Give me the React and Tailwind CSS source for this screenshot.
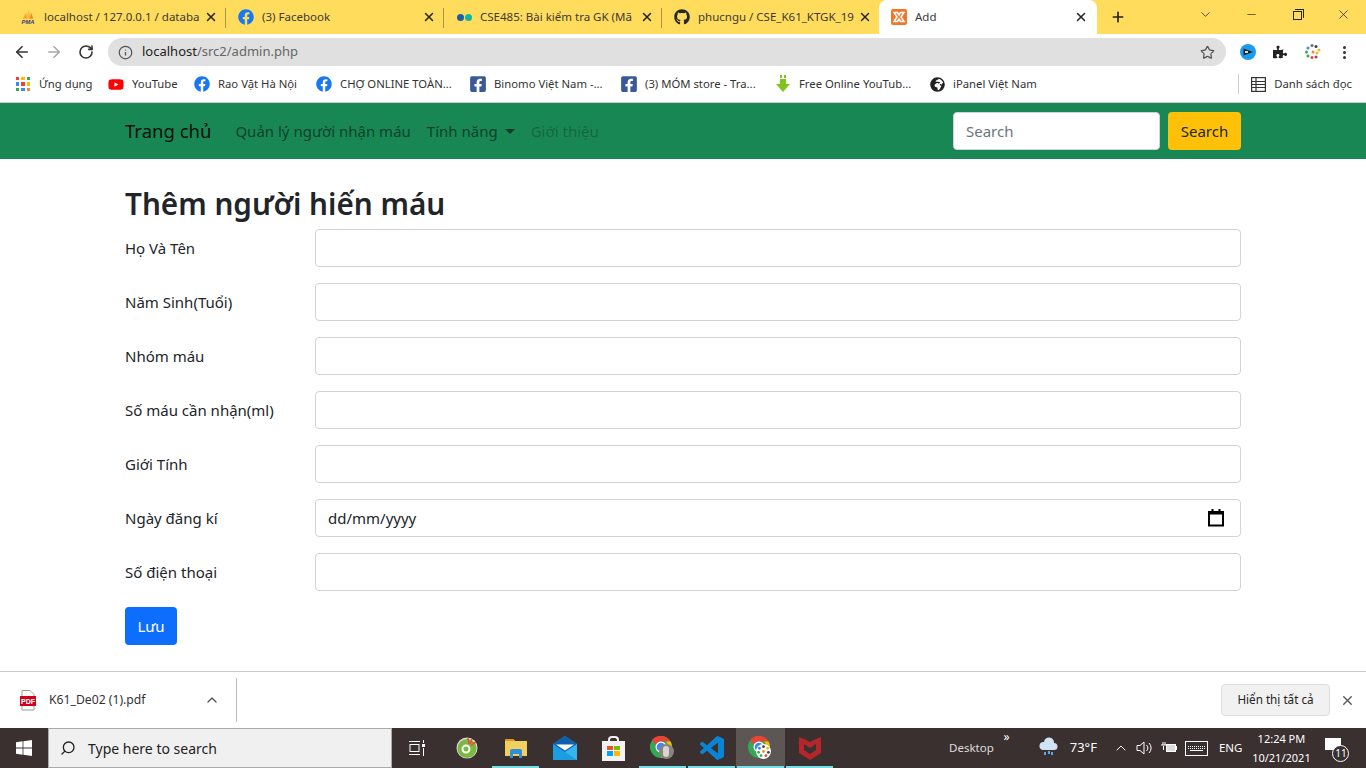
import { FaFacebook, FaGithub, FaYoutube, FaFacebookSquare, FaGlobeAfrica, FaPuzzlePiece } from 'react-icons/fa'
import { ArrowLeft, ArrowRight, RotateCw, Star, Info, X, Plus, ChevronDown, ChevronUp, Minus, Search } from 'lucide-react'

const tabs = [
  { title: 'localhost / 127.0.0.1 / databa', icon: <PmaIcon /> },
  { title: '(3) Facebook', icon: <FaFacebook className="text-[16px] text-[#1877f2]" /> },
  { title: 'CSE485: Bài kiểm tra GK (Mã', icon: <Dots /> },
  { title: 'phucngu / CSE_K61_KTGK_19', icon: <FaGithub className="text-[16px] text-[#24292e]" /> },
]

const bookmarks = [
  { title: 'Ứng dụng', icon: <AppsIcon />, w: 'w-[93px]' },
  { title: 'YouTube', icon: <FaYoutube className="text-[17px] text-[#f00]" />, w: 'w-[86px]' },
  { title: 'Rao Vặt Hà Nội', icon: <FaFacebook className="text-[16px] text-[#1877f2]" />, w: 'w-[122px]' },
  { title: 'CHỢ ONLINE TOÀN...', icon: <FaFacebook className="text-[16px] text-[#1877f2]" />, w: 'w-[154px]' },
  { title: 'Binomo Việt Nam -...', icon: <FaFacebookSquare className="text-[18px] text-[#3b5998]" />, w: 'w-[151px]' },
  { title: '(3) MÓM store - Tra...', icon: <FaFacebookSquare className="text-[18px] text-[#3b5998]" />, w: 'w-[154px]' },
  { title: 'Free Online YouTub...', icon: <DownIcon />, w: 'w-[154px]' },
  { title: 'iPanel Việt Nam', icon: <FaGlobeAfrica className="text-[15px] text-[#222]" />, w: 'w-[120px]' },
]

const fields = ['Họ Và Tên', 'Năm Sinh(Tuổi)', 'Nhóm máu', 'Số máu cần nhận(ml)', 'Giới Tính', 'Ngày đăng kí', 'Số điện thoại']

function PmaIcon() {
  return (
    <svg width="18" height="18" viewBox="0 0 18 18">
      <path d="M3 11 L7 4 L8 11 Z" fill="#f6a623" />
      <path d="M7 11 L10 1 L12 11 Z" fill="#f9b54c" />
      <path d="M11 11 L12.500 4 L15 11 Z" fill="#f08a1d" />
      <text x="9" y="17" fontSize="6.500" fontWeight="700" fontStyle="italic" fill="#2f3f7f" textAnchor="middle" fontFamily="Liberation Sans">PMA</text>
    </svg>
  )
}

function Dots() {
  return (
    <span className="flex gap-[1px]">
      <span className="w-[7px] h-[7px] rounded-full bg-[#1a5fa8]" />
      <span className="w-[7px] h-[7px] rounded-full bg-[#12b6a0]" />
    </span>
  )
}

function XamppIcon() {
  return (
    <svg width="16" height="16" viewBox="0 0 16 16" className="shrink-0">
      <rect width="16" height="16" rx="2" fill="#f0762b" />
      <path d="M3 3.500h3.500L8 6l1.500-2.500H13L10 8l3 4.500H9.500L8 10l-1.500 2.500H3L6 8z" fill="none" stroke="#fff" strokeWidth="1.500" />
    </svg>
  )
}

function AppsIcon() {
  const colors = ['#ea4335', '#fbbc04', '#34a853', '#4285f4', '#ea4335', '#fbbc04', '#34a853', '#4285f4', '#f28b1d']
  return (
    <span className="grid grid-cols-3 gap-[2px] w-[14px]">
      {colors.map((c, i) => <span key={i} className="w-[3.3px] h-[3.3px]" style={{ background: c }} />)}
    </span>
  )
}

function DownIcon() {
  return (
    <svg width="16" height="18" viewBox="0 0 16 18">
      <path d="M5 0h2v3H5zM9 0h2v3H9zM5 4h6v5h4l-7 8-7-8h4z" fill="#7fc31c" />
    </svg>
  )
}

function ReadingListIcon() {
  return (
    <svg width="15" height="15" viewBox="0 0 15 15" fill="none" stroke="#333" strokeWidth="1.200">
      <rect x=".6" y=".6" width="13.800" height="13.800" />
      <path d="M.6 4.500h13.800M.6 7.500h13.800M.6 10.500h13.800M5 .6v13.800" />
    </svg>
  )
}

function ExtensionCircle() {
  return (
    <svg width="16" height="16" viewBox="0 0 16 16">
      <circle cx="8" cy="8" r="8" fill="#1a9cf0" />
      <path d="M3.500 4.500 13 8l-9.500 3.500z" fill="#222" />
      <path d="M5 7h3v2H5z" fill="#ddd" />
    </svg>
  )
}

function ColorDots() {
  const dots = [
    [7, 1.500, '#5f6f8a'], [11, 2.500, '#444'], [3, 4, '#4285f4'], [14, 6, '#f9b233'], [1.500, 8, '#34a853'],
    [8, 8, '#f28b1d'], [12, 9, '#f9b233'], [3, 12, '#34a853'], [7, 13.500, '#ea4335'], [11, 13, '#a04060'],
  ]
  return (
    <svg width="16" height="16" viewBox="0 0 16 16">
      {dots.map(([x, y, c], i) => <circle key={i} cx={x} cy={y} r="1.500" fill={c} />)}
    </svg>
  )
}

function PdfIcon() {
  return (
    <svg width="16" height="21" viewBox="0 0 16 21">
      <path d="M2 .5h8l4 4V20H2z" fill="#fff" stroke="#999" />
      <rect y="6" width="16" height="10" fill="#d0021b" />
      <text x="8" y="14" fontSize="7" fontWeight="700" fill="#fff" textAnchor="middle" fontFamily="Liberation Sans">PDF</text>
    </svg>
  )
}

function WindowsIcon() {
  return (
    <svg width="16" height="16" viewBox="0 0 16 16" fill="#fff">
      <path d="M0 2.200 6.600 1.300v6.300H0zM7.400 1.200 16 0v7.600H7.400zM0 8.400h6.600v6.300L0 13.800zM7.400 8.400H16V16l-8.600-1.200z" />
    </svg>
  )
}

function CalendarIcon() {
  return (
    <svg width="16" height="18" viewBox="0 0 16 18" className="ml-auto mr-[4px]">
      <path d="M3.500 0h2v3h-2zM10.500 0h2v3h-2z" fill="#000" />
      <rect x="1" y="3" width="14" height="13.500" fill="#fff" stroke="#000" strokeWidth="2" />
      <rect x="1" y="2" width="14" height="3.500" fill="#000" />
    </svg>
  )
}

function ChromeIcon({ badge }) {
  return (
    <span className="relative w-6 h-6 -mt-[2px] -ml-[4px]">
      <svg width="24" height="24" viewBox="0 0 24 24">
        <circle cx="12" cy="12" r="11" fill="#34a853" />
        <path d="M12 1a11 11 0 0 1 9.500 5.500H12a5.500 5.500 0 0 0-5 3.200L3 5a11 11 0 0 1 9-4z" fill="#ea4335" />
        <path d="M21.500 6.500A11 11 0 0 1 12 23l5-8a5.500 5.500 0 0 0 0-8.500z" fill="#fbbc04" />
        <circle cx="12" cy="12" r="5.500" fill="#fff" />
        <circle cx="12" cy="12" r="4.300" fill="#4285f4" />
      </svg>
      {badge === 'dots' && (
        <span className="absolute top-[9px] left-[9px] w-[15px] h-[15px] rounded-full bg-white flex items-center justify-center">
          <svg width="13" height="13" viewBox="0 0 16 16">
            {[[8, 2, '#444'], [13, 4, '#f9b233'], [3, 4, '#4285f4'], [2, 9, '#34a853'], [8, 8, '#f28b1d'], [14, 9, '#444'], [5, 13, '#34a853'], [11, 13, '#ea4335']].map(([x, y, c], i) => (
              <circle key={i} cx={x} cy={y} r="1.700" fill={c} />
            ))}
          </svg>
        </span>
      )}
      {badge === 'grey' && (
        <span className="absolute top-[9px] left-[10px] w-[15px] h-[15px] rounded-full bg-[#8a827e] flex items-center justify-center">
          <span className="w-[6px] h-[11px] rounded-full bg-[#d8d4d0]" />
        </span>
      )}
    </span>
  )
}

function TaskApp({ active, running, children }) {
  return (
    <div className={`relative h-10 w-[49px] flex items-center justify-center ${active ? 'bg-[#5c5654]' : ''}`}>
      {children}
      {running && <span className="absolute bottom-0 left-[1px] right-[1px] h-[2px] bg-[#76dfe6]" />}
    </div>
  )
}

function FormRow({ label, children }) {
  return (
    <div className="flex items-center mb-4">
      <label className="w-[190px] shrink-0 text-[#212529] text-[15px]">{label}</label>
      {children || <input className="flex-1 h-[38px] border border-[#ced4da] rounded bg-white" />}
    </div>
  )
}

export default function App() {
  return (
    <div className="h-screen overflow-hidden flex flex-col bg-white font-['Noto_Sans','Open_Sans',sans-serif]">
      {/* tab strip */}
      <div className="h-[34px] shrink-0 bg-[#ffdc5c] flex items-end pl-2 text-[11.5px] text-[#3a3a3a]">
        {tabs.map((t, i) => (
          <div key={t.title} className={`w-[218px] h-[34px] flex items-center pl-3 pr-[8px] ${i < 3 ? 'relative' : ''}`}>
            <span className="w-4 h-4 flex items-center justify-center shrink-0">{t.icon}</span>
            <span className="ml-2 flex-1 whitespace-nowrap">{t.title}</span>
            <X size={14} strokeWidth={2.500} className="text-[#222] shrink-0" />
            {i < 3 && <span className="absolute right-0 top-[8px] h-[20px] w-px bg-[#a8954a]" />}
          </div>
        ))}
        <div className="w-[218px] h-[34px] bg-white rounded-t-lg flex items-center pl-3 pr-[9px] -ml-px">
          <XamppIcon />
          <span className="ml-2 flex-1">Add</span>
          <X size={14} strokeWidth={2.500} className="text-[#222]" />
        </div>
        <Plus size={16} strokeWidth={2.500} className="ml-[13px] mb-[9px] text-[#222]" />
        <div className="ml-auto flex items-center h-[29px] self-start text-[#222]">
          <ChevronDown size={15} strokeWidth={1.200} className="mr-[32px]" />
          <Minus size={13} strokeWidth={1.200} className="mr-[35px]" />
          <span className="relative w-[9px] h-[9px] border border-[#222] mt-[1px] mr-[34px]">
            <span className="absolute -top-[3px] -right-[3px] w-[9px] h-[9px] border-t border-r border-[#222]" />
          </span>
          <X size={15} strokeWidth={1.200} className="mr-[15px]" />
        </div>
      </div>

      {/* toolbar */}
      <div className="h-9 shrink-0 bg-white flex items-center pl-[13px] pr-[12px]">
        <ArrowLeft size={18} strokeWidth={2.200} className="text-[#333]" />
        <ArrowRight size={18} strokeWidth={2.200} className="ml-[14px] text-[#aaa]" />
        <RotateCw size={16} strokeWidth={2.400} className="ml-[15px] text-[#333]" />
        <div className="ml-[14px] flex-1 h-7 rounded-full bg-[#e0e0e0] flex items-center pl-[10px] pr-[11px] text-[13px]">
          <Info size={15} className="text-[#555]" />
          <span className="ml-[9px] text-[#222]">localhost</span>
          <span className="text-[#666]">/src2/admin.php</span>
          <Star size={15} className="ml-auto text-[#555]" />
        </div>
        <span className="ml-[14px]"><ExtensionCircle /></span>
        <FaPuzzlePiece className="ml-[17px] text-[14px] text-[#222]" />
        <span className="ml-[18px]"><ColorDots /></span>
        <span className="ml-[22px] mr-[8px] flex flex-col gap-[2px]">
          <span className="w-[3px] h-[3px] rounded-full bg-[#333]" />
          <span className="w-[3px] h-[3px] rounded-full bg-[#333]" />
          <span className="w-[3px] h-[3px] rounded-full bg-[#333]" />
        </span>
      </div>

      {/* bookmarks */}
      <div className="h-[33px] shrink-0 bg-white border-b border-[#ccc] flex items-center pb-[4px] pl-[15px] text-[11.3px] text-[#333]">
        {bookmarks.map((b) => (
          <div key={b.title} className={`${b.w} flex items-center shrink-0 whitespace-nowrap`}>
            <span className="w-[16px] flex justify-center shrink-0">{b.icon}</span>
            <span className="ml-2">{b.title}</span>
          </div>
        ))}
        <div className="ml-auto flex items-center pr-[14px]">
          <span className="w-px h-[20px] bg-[#ccc] mr-[12px]" />
          <span className="mr-[8px] flex"><ReadingListIcon /></span>
          <span>Danh sách đọc</span>
        </div>
      </div>

      {/* navbar */}
      <nav className="h-14 shrink-0 bg-[#198754] flex items-center pl-[125px] pr-[125px] text-[15px]">
        <span className="text-[18.500px] text-black/90">Trang chủ</span>
        <span className="ml-6 text-black/55">Quản lý người nhận máu</span>
        <span className="ml-4 text-black/55 flex items-center">
          Tính năng
          <span className="ml-[7px] w-0 h-0 border-x-[5px] border-x-transparent border-t-[5px] border-t-black/55" />
        </span>
        <span className="ml-[16px] text-black/25">Giới thiệu</span>
        <input
          placeholder="Search"
          className="ml-auto w-[207px] h-[38px] px-3 rounded bg-white border border-[#ced4da] placeholder:text-[#6c757d]"
        />
        <button className="ml-2 w-[73px] h-[38px] rounded bg-[#ffc107] text-[#212529]">Search</button>
      </nav>

      {/* content */}
      <main className="flex-1 px-[125px] pt-[26px] overflow-hidden">
        <h1 className="text-[29.700px] font-semibold leading-[38px] text-[#212529] mb-[6px]">Thêm người hiến máu</h1>
        <FormRow label={fields[0]} />
        <FormRow label={fields[1]} />
        <FormRow label={fields[2]} />
        <FormRow label={fields[3]} />
        <FormRow label={fields[4]} />
        <FormRow label={fields[5]}>
          <div className="flex-1 h-[38px] border border-[#ced4da] rounded bg-white flex items-center px-3 text-[15px] text-[#212529]">
            <span>dd/mm/yyyy</span>
            <CalendarIcon />
          </div>
        </FormRow>
        <FormRow label={fields[6]} />
        <button className="w-[52px] h-[38px] rounded bg-[#0d6efd] text-white text-[15px]">Lưu</button>
      </main>

      {/* downloads */}
      <div className="h-[57px] shrink-0 bg-white border-t border-[#ccc] flex items-center pl-5 pr-[11px]">
        <PdfIcon />
        <span className="ml-[13px] text-[12.200px] text-[#333]">K61_De02 (1).pdf</span>
        <ChevronUp size={16} strokeWidth={2} className="ml-[58px] text-[#555]" />
        <span className="ml-[16px] w-px h-[44px] bg-[#bbb]" />
        <button className="ml-auto w-[109px] h-[32px] rounded border border-[#ddd] bg-[#f1f1f1] text-[11.700px] text-[#222]">Hiển thị tất cả</button>
        <X size={15} strokeWidth={2.200} className="ml-[10px] text-[#555]" />
      </div>

      {/* taskbar */}
      <div className="h-10 shrink-0 bg-[#3a302f] flex items-center text-white">
        <div className="w-12 flex justify-center"><WindowsIcon /></div>
        <div className="w-[344px] h-10 bg-[#f0f0f0] flex items-center pl-[11px] border border-[#aaa] text-[14px] text-[#222]">
          <Search size={16} className="-scale-x-100" />
          <span className="ml-[12px]">Type here to search</span>
        </div>
        <div className="w-[50px] flex justify-center">
          <svg width="16" height="16" viewBox="0 0 16 16" fill="none" stroke="#fff">
            <path d="M0 1.500h11M0 14.500h11" />
            <rect x="1" y="4.500" width="9" height="7" />
            <path d="M14.500 0v3M14.500 8v8" />
            <rect x="13" y="4" width="3" height="3" fill="#fff" stroke="none" />
          </svg>
        </div>
        <TaskApp>
          <svg width="22" height="22" viewBox="0 0 22 22">
            <circle cx="11" cy="11" r="10.500" fill="#ddd" />
            <circle cx="11" cy="11.500" r="9.500" fill="#7cb83f" />
            <circle cx="10" cy="12" r="3.500" fill="none" stroke="#fff" strokeWidth="2" />
            <path d="M12 1 13 7M16 2 14 7M20 5 15 8" stroke="#e8503a" strokeWidth="1.500" />
          </svg>
        </TaskApp>
        <TaskApp running>
          <svg width="22" height="20" viewBox="0 0 22 20">
            <path d="M0 1h8l2 2h12v15H0z" fill="#f3cf62" />
            <path d="M0 1h8l2 2H0z" fill="#d89b1c" />
            <path d="M5 13a2 2 0 0 1 2-2h8a2 2 0 0 1 2 2v7h-3v-4H8v4H5z" fill="#2f8fd8" />
          </svg>
        </TaskApp>
        <TaskApp>
          <svg width="24" height="24" viewBox="0 0 24 24">
            <path d="M12 0 24 8v16H0V8z" fill="#1b9de2" />
            <path d="M12 0 24 8l-12 8L0 8z" fill="#0f5fb0" />
            <path d="M3 8.500h18l-9 6z" fill="#fff" />
            <path d="M12 16 24 8v16z" fill="#35b4f0" />
          </svg>
        </TaskApp>
        <TaskApp>
          <span className="relative w-[23px] h-[20px] mt-[5px] bg-[#f2f2f2] grid grid-cols-2 gap-[1px] p-[5px]">
            <span className="absolute -top-[5px] left-[6px] w-[11px] h-[6px] border-2 border-b-0 border-[#f2f2f2] rounded-t" />
            <span className="bg-[#f25022]" />
            <span className="bg-[#7fba00]" />
            <span className="bg-[#00a4ef]" />
            <span className="bg-[#ffb900]" />
          </span>
        </TaskApp>
        <TaskApp running><ChromeIcon badge="grey" /></TaskApp>
        <TaskApp running>
          <svg width="24" height="24" viewBox="0 0 24 24">
            <path d="M23.150 2.587L18.210.21a1.494 1.494 0 0 0-1.705.29l-9.460 8.630-4.120-3.128a.999.999 0 0 0-1.276.057L.327 7.261A1 1 0 0 0 .326 8.740L3.899 12 .326 15.260a1 1 0 0 0 .001 1.479L1.650 17.940a.999.999 0 0 0 1.276.057l4.120-3.128 9.460 8.630a1.492 1.492 0 0 0 1.704.29l4.942-2.377A1.500 1.500 0 0 0 24 20.060V3.939a1.500 1.500 0 0 0-.85-1.352zm-5.146 14.861L10.826 12l7.178-5.448v10.896z" fill="#0a84d6" />
          </svg>
        </TaskApp>
        <TaskApp active running><ChromeIcon badge="dots" /></TaskApp>
        <TaskApp running>
          <svg width="22" height="26" viewBox="0 0 22 26">
            <path d="M0 2l5 2 6 3 6-3 5-2v16l-11 7L0 18z" fill="#b5262c" />
            <path d="M5 9l6 4 6-4v6l-6 4-6-4z" fill="#3a302f" />
          </svg>
        </TaskApp>

        {/* tray */}
        <span className="relative ml-[115px] text-[11.500px] text-[#ddd]">
          Desktop
          <span className="absolute -top-[11px] -right-[16px] text-[12px] text-white">»</span>
        </span>
        <svg width="22" height="22" viewBox="0 0 22 22" className="ml-[44px]">
          <path d="M5 13a4 4 0 0 1 1-8 5 5 0 0 1 10 1 3.500 3.500 0 0 1 0 7z" fill="#cfe3f5" />
          <path d="M7 15v3M11 14v3M14 15v3" stroke="#5aa9e6" strokeWidth="2" />
        </svg>
        <span className="ml-[10px] text-[13px]">73°F</span>
        <ChevronUp size={16} className="ml-[16px]" strokeWidth={1.500} />
        <svg width="17" height="16" viewBox="0 0 17 16" fill="none" stroke="#fff" className="ml-[7px]">
          <path d="M1 5.500h3L8 2v12l-4-3.500H1z" />
          <path d="M10.500 5a4 4 0 0 1 0 6M13 3a7 7 0 0 1 0 10" />
        </svg>
        <svg width="16" height="12" viewBox="0 0 16 12" className="ml-[8px]">
          <path d="M0 3h5M2 0v3M4 0v3M2.500 4v4" stroke="#fff" fill="none" />
          <rect x="5.500" y="2.500" width="9" height="7" fill="#ddd" stroke="#fff" />
          <rect x="15" y="4" width="1" height="4" fill="#fff" />
        </svg>
        <span className="ml-[8px] w-[23px] h-[15px] border border-white flex flex-col justify-center items-center gap-[1px]">
          <span className="w-[17px] border-t border-dotted border-white" />
          <span className="w-[17px] border-t border-dotted border-white" />
          <span className="w-[13px] border-t border-white" />
        </span>
        <span className="ml-[11px] text-[11.500px]">ENG</span>
        <div className="ml-[11px] w-[56px] flex flex-col items-center text-[11px] leading-[19px] whitespace-nowrap">
          <span>12:24 PM</span>
          <span>10/21/2021</span>
        </div>
        <span className="relative ml-[16px] w-[16px] h-[12px] bg-white mb-[8px]">
          <span className="absolute top-[7px] left-[7px] w-[17px] h-[17px] rounded-full bg-[#3a302f] border border-white text-[10px] leading-[15px] text-center">11</span>
        </span>
      </div>
    </div>
  )
}
